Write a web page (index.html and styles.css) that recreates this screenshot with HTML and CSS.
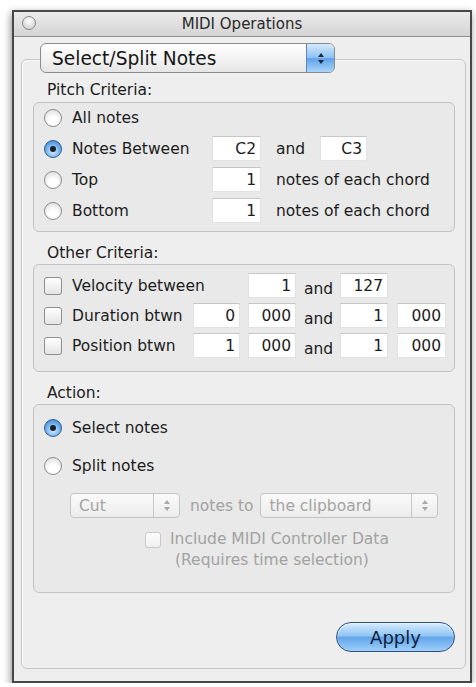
FILE: index.html
```html
<!DOCTYPE html>
<html lang="en">
<head>
  <meta charset="UTF-8">
  <title>MIDI Operations</title>
  <link rel="stylesheet" href="styles.css">
</head>
<body>
  <div class="window">
    <div class="titlebar">
      <span class="close"></span>
      <span class="title">MIDI Operations</span>
    </div>

    <div class="content">
      <div class="main-group">
        <!-- operation chooser sits on the group line -->
        <div class="popup main-popup">
          <span class="popup-text">Select/Split Notes</span>
          <span class="arrows blue"><i class="up"></i><i class="down"></i></span>
        </div>

        <div class="section-label first">Pitch Criteria:</div>
        <div class="box pitch-grid">
          <div class="opt"><span class="radio"></span>All notes</div>
          <div class="opt row2"><span class="radio on"></span>Notes Between</div>
          <div class="field row2">C2</div>
          <div class="word row2">and</div>
          <div class="field row2">C3</div>
          <div class="opt row3"><span class="radio"></span>Top</div>
          <div class="field row3">1</div>
          <div class="word wide row3">notes of each chord</div>
          <div class="opt row4"><span class="radio"></span>Bottom</div>
          <div class="field row4">1</div>
          <div class="word wide row4">notes of each chord</div>
        </div>

        <div class="section-label">Other Criteria:</div>
        <div class="box other-grid">
          <div class="opt"><span class="check"></span>Velocity between</div>
          <div class="field c3">1</div>
          <div class="word c4">and</div>
          <div class="field c5">127</div>

          <div class="opt"><span class="check"></span>Duration btwn</div>
          <div class="field c2">0</div>
          <div class="field c3">000</div>
          <div class="word c4">and</div>
          <div class="field c5">1</div>
          <div class="field c6">000</div>

          <div class="opt"><span class="check"></span>Position btwn</div>
          <div class="field c2">1</div>
          <div class="field c3">000</div>
          <div class="word c4">and</div>
          <div class="field c5">1</div>
          <div class="field c6">000</div>
        </div>

        <div class="section-label">Action:</div>
        <div class="box action">
          <div class="opt"><span class="radio on"></span>Select notes</div>
          <div class="opt split"><span class="radio"></span>Split notes</div>
          <div class="split-row">
            <div class="popup small cut">
              <span class="popup-text">Cut</span>
              <span class="arrows"><i class="up"></i><i class="down"></i></span>
            </div>
            <span class="dim">notes to</span>
            <div class="popup small dest">
              <span class="popup-text">the clipboard</span>
              <span class="arrows"><i class="up"></i><i class="down"></i></span>
            </div>
          </div>
          <div class="include dim"><span class="check off"></span>Include MIDI Controller Data</div>
          <div class="requires dim">(Requires time selection)</div>
        </div>

        <div class="button-row">
          <button class="apply">Apply</button>
        </div>
      </div>
    </div>
  </div>
</body>
</html>
```

FILE: styles.css
```css
body {
  margin: 0;
  background: #fff;
  font-family: "DejaVu Sans", "Liberation Sans", sans-serif;
  font-size: 15.5px;
  color: #1c1c1c;
}

.window {
  box-sizing: border-box;
  width: 460px;
  margin: 10px 0 0 12px;
  border: 2px solid #474747;
  background: #eeeeee;
  box-shadow: -1px 3px 8px rgba(0, 0, 0, 0.45);
}

.titlebar {
  position: relative;
  height: 24px;
  display: flex;
  align-items: center;
  justify-content: center;
  border-bottom: 1px solid #8e8e8e;
  background: linear-gradient(#ebebeb, #d4d4d4);
  color: #2a2a2a;
  font-size: 15px;
}

.close {
  position: absolute;
  left: 8px;
  top: 4px;
  box-sizing: border-box;
  width: 14px;
  height: 14px;
  border-radius: 50%;
  border: 1px solid #8a8a8a;
  background: radial-gradient(circle at 50% 35%, #ffffff, #c6c6c6);
}

.content {
  padding: 22px 4px 12px 7px;
}

.main-group {
  border: 1px solid #c6c6c6;
  border-radius: 6px;
  padding: 0 10px 16px 11px;
  box-shadow: inset 1px 1px 0 #f8f8f8;
}

/* popups */
.popup {
  box-sizing: border-box;
  display: flex;
  align-items: center;
  border-radius: 6px;
  overflow: hidden;
}

.main-popup {
  width: 295px;
  height: 30px;
  margin: -17px 0 0 7px;
  border: 1px solid #8c8c8c;
  background: linear-gradient(#ffffff, #f1f1f1 60%, #e6e6e6);
  font-size: 18.6px;
  color: #161616;
}

.popup-text {
  flex: 1;
  padding-left: 11px;
}

.arrows {
  box-sizing: border-box;
  align-self: stretch;
  width: 26px;
  display: flex;
  flex-direction: column;
  align-items: center;
  justify-content: center;
  gap: 3px;
  border-left: 1px solid #c8c8c8;
}

.arrows.blue {
  width: 28px;
  border-left: 1px solid #5c86b8;
  background: linear-gradient(#d6e9fc, #8cc1f3 50%, #5fa3ea 52%, #a9d5fb);
}

.arrows i {
  width: 0;
  height: 0;
  border-left: 3px solid transparent;
  border-right: 3px solid transparent;
}

.arrows i.up {
  border-bottom: 4px solid #1e2a3c;
}

.arrows i.down {
  border-top: 4px solid #1e2a3c;
}

.popup.small {
  height: 25px;
  border: 1px solid #c4c4c4;
  border-radius: 4px;
  background: linear-gradient(#fafafa, #ececec);
  color: #a4a4a4;
}

.popup.small .popup-text {
  padding-left: 8px;
}

.popup.small .arrows i.up {
  border-bottom-color: #a8a8a8;
}

.popup.small .arrows i.down {
  border-top-color: #a8a8a8;
}

/* sections */
.section-label {
  line-height: 18px;
  margin: 12px 0 2px;
  padding-left: 14px;
}

.section-label.first {
  margin: 8px 0 3px;
}

.box {
  border: 1px solid #c2c2c2;
  border-radius: 6px;
  background: #e9e9e9;
  padding-left: 10px;
}

.opt {
  display: flex;
  align-items: center;
  gap: 10px;
  white-space: nowrap;
}

.radio {
  box-sizing: border-box;
  width: 18px;
  height: 18px;
  flex: none;
  border-radius: 50%;
  border: 1px solid #8c8c8c;
  background: radial-gradient(circle at 50% 70%, #ffffff 30%, #d8d8d8);
  display: flex;
  align-items: center;
  justify-content: center;
}

.radio.on {
  border-color: #2f5d94;
  background: radial-gradient(circle at 50% 65%, #c4e2fd 10%, #6eaeea 55%, #3a78c2);
}

.radio.on::after {
  content: "";
  width: 6px;
  height: 6px;
  border-radius: 50%;
  background: #17222f;
}

.check {
  box-sizing: border-box;
  width: 18px;
  height: 18px;
  flex: none;
  border-radius: 3px;
  border: 1px solid #8e8e8e;
  background: linear-gradient(#ffffff, #e4e4e4);
}

.check.off {
  width: 16px;
  height: 16px;
  border-color: #c8c8c8;
  background: linear-gradient(#fdfdfd, #f0f0f0);
}

.field {
  box-sizing: border-box;
  height: 25px;
  padding: 2px 4px 0 0;
  text-align: right;
  background: #fff;
  border: 1px solid #e2e2e2;
  border-top-color: #c6c6c6;
  line-height: 20px;
}

.word {
  white-space: nowrap;
}

/* pitch criteria */
.pitch-grid {
  display: grid;
  grid-template-columns: 168px 49px 59px 47px;
  grid-auto-rows: 25px;
  row-gap: 6px;
  align-items: center;
  padding-top: 2px;
  padding-bottom: 8px;
}

.pitch-grid .opt {
  grid-column: 1;
}

.pitch-grid .word {
  padding-left: 15px;
}

.pitch-grid .word.wide {
  grid-column: 3 / span 2;
}

/* other criteria */
.other-grid {
  display: grid;
  grid-template-columns: 149px 47px 56px 44px 57px 49px;
  grid-auto-rows: 25px;
  row-gap: 5px;
  align-items: center;
  padding-top: 8px;
  padding-bottom: 13px;
}

.other-grid .opt {
  grid-column: 1;
}

.other-grid .c2 { grid-column: 2; }
.other-grid .c3 { grid-column: 3; width: 48px; justify-self: end; }
.other-grid .c4 { grid-column: 4; padding: 6px 0 0 8px; }
.other-grid .c5 { grid-column: 5; width: 48px; justify-self: start; }
.other-grid .c6 { grid-column: 6; }

/* action */
.action {
  display: flex;
  flex-direction: column;
  padding-top: 13px;
  padding-bottom: 21px;
}

.action .opt {
  height: 20px;
}

.action .split {
  margin-top: 18px;
}

.split-row {
  display: flex;
  align-items: center;
  margin: 17px 0 0 26px;
}

.cut {
  width: 110px;
}

.split-row .dim {
  padding: 0 7px 0 10px;
}

.dest {
  width: 178px;
}

.dim {
  color: #a2a2a2;
}

.include {
  display: flex;
  align-items: center;
  gap: 9px;
  line-height: 21px;
  margin: 11px 0 0 101px;
}

.requires {
  line-height: 21px;
  margin-left: 131px;
}

.button-row {
  display: flex;
  justify-content: flex-end;
  margin-top: 29px;
}

.apply {
  width: 119px;
  height: 30px;
  border: 1px solid #2d4f7f;
  border-radius: 15px;
  background: linear-gradient(#d3e9fd, #92c6f4 45%, #62a6ea 52%, #9fd0fb);
  box-shadow: inset 0 1px 2px rgba(255, 255, 255, 0.7);
  font-family: "DejaVu Sans", sans-serif;
  font-size: 18px;
  color: #13203a;
  padding: 0;
}
```
